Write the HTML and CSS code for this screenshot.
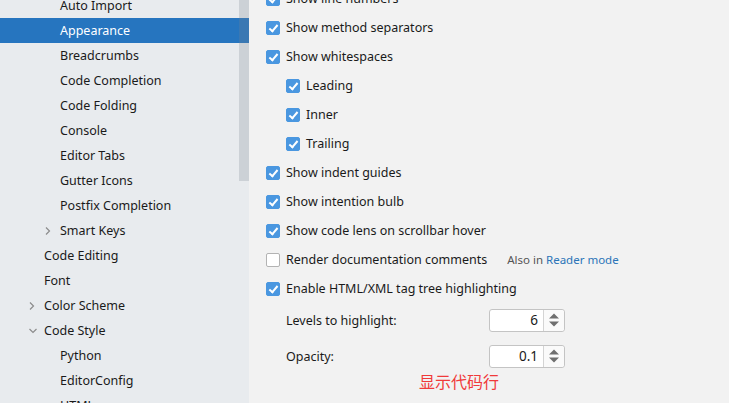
FILE: index.html
```html
<!DOCTYPE html>
<html>
<head>
<meta charset="utf-8">
<link rel="stylesheet" href="styles.css">
</head>
<body>
<div class="app">
  <aside class="sidebar">
    <ul class="tree">
      <li class="row l2">Auto Import</li>
      <li class="row l2 selected">Appearance</li>
      <li class="row l2">Breadcrumbs</li>
      <li class="row l2">Code Completion</li>
      <li class="row l2">Code Folding</li>
      <li class="row l2">Console</li>
      <li class="row l2">Editor Tabs</li>
      <li class="row l2">Gutter Icons</li>
      <li class="row l2">Postfix Completion</li>
      <li class="row l2"><span class="chev"><svg width="8" height="10" viewBox="0 0 8 10"><path d="M2 1.5 L5.5 5 L2 8.5" fill="none" stroke="#8c8c8c" stroke-width="1.2"/></svg></span>Smart Keys</li>
      <li class="row l1">Code Editing</li>
      <li class="row l1">Font</li>
      <li class="row l1"><span class="chev"><svg width="8" height="10" viewBox="0 0 8 10"><path d="M2 1.5 L5.5 5 L2 8.5" fill="none" stroke="#8c8c8c" stroke-width="1.2"/></svg></span>Color Scheme</li>
      <li class="row l1"><span class="chev"><svg width="10" height="8" viewBox="0 0 10 8"><path d="M1.5 2 L5 5.5 L8.5 2" fill="none" stroke="#8c8c8c" stroke-width="1.2"/></svg></span>Code Style</li>
      <li class="row l2">Python</li>
      <li class="row l2">EditorConfig</li>
      <li class="row l2">HTML</li>
    </ul>
    <div class="thumb"></div>
  </aside>
  <main class="panel">
    <div class="opt"><span class="cb on"></span>Show line numbers</div>
    <div class="opt"><span class="cb on"></span>Show method separators</div>
    <div class="opt"><span class="cb on"></span>Show whitespaces</div>
    <div class="opt sub"><span class="cb on"></span>Leading</div>
    <div class="opt sub"><span class="cb on"></span>Inner</div>
    <div class="opt sub"><span class="cb on"></span>Trailing</div>
    <div class="opt"><span class="cb on"></span>Show indent guides</div>
    <div class="opt"><span class="cb on"></span>Show intention bulb</div>
    <div class="opt"><span class="cb on"></span>Show code lens on scrollbar hover</div>
    <div class="opt"><span class="cb"></span>Render documentation comments<span class="also">Also in <span class="link">Reader mode</span></span></div>
    <div class="opt"><span class="cb on"></span>Enable HTML/XML tag tree highlighting</div>
    <div class="field f1"><span class="flabel">Levels to highlight:</span>
      <div class="spin"><span class="val">6</span><span class="arrows"><svg width="12" height="16" viewBox="0 0 12 16"><path d="M6 1.5 L11 6.5 L1 6.5 Z M6 14.5 L11 9.5 L1 9.5 Z" fill="#6f6f6f"/></svg></span></div>
    </div>
    <div class="field f2"><span class="flabel">Opacity:</span>
      <div class="spin"><span class="val">0.1</span><span class="arrows"><svg width="12" height="16" viewBox="0 0 12 16"><path d="M6 1.5 L11 6.5 L1 6.5 Z M6 14.5 L11 9.5 L1 9.5 Z" fill="#6f6f6f"/></svg></span></div>
    </div>
    <div class="note">显示代码行</div>
  </main>
</div>
</body>
</html>
```
FILE: styles.css
```css
* { box-sizing: border-box; }
html, body { margin: 0; padding: 0; }
body {
  width: 729px;
  height: 403px;
  overflow: hidden;
  font-family: "Noto Sans", "Noto Sans CJK SC", sans-serif;
  font-size: 12.5px;
  color: #1a1a1a;
}
.app {
  display: flex;
  width: 729px;
  height: 403px;
}
.sidebar {
  position: relative;
  width: 249px;
  flex: 0 0 249px;
  background: #e8ebee;
  overflow: hidden;
}
.tree {
  list-style: none;
  margin: -7px 0 0 0;
  padding: 0;
}
.row {
  position: relative;
  height: 25px;
  line-height: 25px;
  white-space: nowrap;
}
.row.l2 { padding-left: 60px; }
.row.l1 { padding-left: 44px; }
.row.selected { background: #2675bf; color: #fff; }
.chev {
  position: absolute;
  top: 0;
  height: 25px;
  display: flex;
  align-items: center;
}
.row.l2 .chev { left: 44px; }
.row.l1 .chev { left: 28px; }
.thumb {
  position: absolute;
  left: 239px;
  top: 0;
  width: 10px;
  height: 181px;
  background: rgba(120, 130, 145, 0.25);
}
.panel {
  flex: 1;
  background: #f2f2f2;
  padding: 0 0 0 17px;
  display: flex;
  flex-direction: column;
  overflow: hidden;
}
.opt {
  height: 29px;
  display: flex;
  align-items: center;
  white-space: nowrap;
}
.opt:first-child { margin-top: -16px; }
.opt.sub { padding-left: 20px; }
.cb {
  width: 14px;
  height: 14px;
  border-radius: 2px;
  border: 1px solid #b3b3b3;
  background: #fff;
  margin-right: 6px;
  flex: 0 0 14px;
  position: relative;
}
.cb.on {
  background: #4a97e0;
  border-color: #4a97e0;
}
.cb.on::after {
  content: "";
  position: absolute;
  left: 4px;
  top: 1px;
  width: 3px;
  height: 7px;
  border-right: 2px solid #fff;
  border-bottom: 2px solid #fff;
  transform: rotate(40deg);
}
.also {
  margin-left: 20px;
  font-size: 11.5px;
  color: #555;
}
.link { color: #2a74b8; }
.field {
  display: flex;
  align-items: center;
  padding-left: 20px;
  width: 299px;
  justify-content: space-between;
}
.f1 { margin-top: 5px; height: 24px; }
.f2 { margin-top: 12px; height: 24px; }
.spin {
  width: 76px;
  height: 23px;
  border: 1px solid #c4c4c4;
  border-radius: 3px;
  background: #fff;
  display: flex;
}
.val {
  width: 53px;
  text-align: right;
  padding-right: 5px;
  line-height: 21px;
  font-size: 13.5px;
}
.arrows {
  flex: 1;
  border-left: 1px solid #d4d4d4;
  background: #fafafa;
  display: flex;
  align-items: center;
  justify-content: center;
  border-radius: 0 3px 3px 0;
}
.note {
  margin-top: 1px;
  padding-left: 153px;
  color: #f03a3a;
  font-size: 16px;
  line-height: 24px;
  font-family: "Noto Sans CJK SC", sans-serif;
}
```
